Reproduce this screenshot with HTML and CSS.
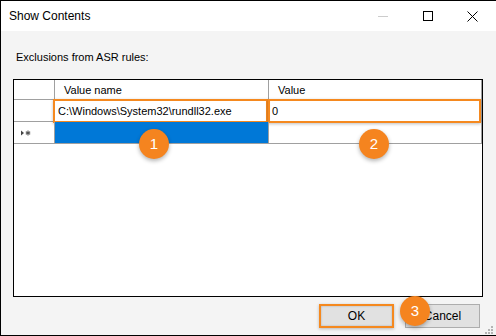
FILE: index.html
```html
<!DOCTYPE html>
<html>
<head>
    <title>Show Contents</title>
    <link rel="stylesheet" href="styles.css">
</head>
<body>
    <div class="window">
        <div class="titlebar">
            <div class="title">Show Contents</div>
            <div class="controls">
                <div class="control">
                    <svg width="10" height="10" viewBox="0 0 10 10"><path d="M0 5.5h10" stroke="#cccccc" stroke-width="1"/></svg>
                </div>
                <div class="control">
                    <svg width="10" height="10" viewBox="0 0 10 10"><rect x="0.5" y="0.5" width="9" height="9" fill="none" stroke="#000" stroke-width="1"/></svg>
                </div>
                <div class="control">
                    <svg width="11" height="11" viewBox="0 0 11 11"><path d="M0.5 0.5l10 10M10.5 0.5l-10 10" stroke="#000" stroke-width="1"/></svg>
                </div>
            </div>
        </div>

        <div class="content">
            <div class="label">Exclusions from ASR rules:</div>

            <div class="grid">
                <div class="cell head corner"></div>
                <div class="cell head">Value name</div>
                <div class="cell head">Value</div>

                <div class="cell rowhead"></div>
                <div class="cell marked name-mark">C:\Windows\System32\rundll32.exe</div>
                <div class="cell marked value-mark">0</div>

                <div class="cell rowhead">
                    <svg width="12" height="8" viewBox="0 0 12 8">
                        <path d="M1 1.5v5l3-2.5z" fill="#444"/>
                        <path d="M8 1.5v5M5.8 2.8l4.4 2.4M5.8 5.2l4.4-2.4" stroke="#555" stroke-width="1.1"/>
                    </svg>
                </div>
                <div class="cell selected"></div>
                <div class="cell"></div>

                <div class="empty"></div>

                <span class="badge badge-one">1</span>
                <span class="badge badge-two">2</span>
            </div>

            <div class="footer">
                <button class="btn btn-ok">OK</button>
                <button class="btn">Cancel</button>
                <span class="badge badge-three">3</span>
                <svg class="grip" width="8" height="8" viewBox="0 0 8 8" fill="#b4b4b4">
                    <rect x="6" y="0" width="2" height="2"/>
                    <rect x="3" y="3" width="2" height="2"/>
                    <rect x="6" y="3" width="2" height="2"/>
                    <rect x="0" y="6" width="2" height="2"/>
                    <rect x="3" y="6" width="2" height="2"/>
                    <rect x="6" y="6" width="2" height="2"/>
                </svg>
            </div>
        </div>
    </div>
</body>
</html>
```

FILE: styles.css
```css
* {
    margin: 0;
    padding: 0;
    box-sizing: border-box;
}

body {
    font-family: 'Liberation Sans', Arial, sans-serif;
    font-size: 11px;
    color: #000;
    background: #fff;
}

.window {
    width: 496px;
    height: 336px;
    border-top: 1px solid #000;
    border-left: 1px solid #000;
    border-bottom: 1px solid #000;
    background: #f4f4f4;
    display: flex;
    flex-direction: column;
}

.titlebar {
    height: 30px;
    background: #fff;
    display: flex;
    align-items: center;
    justify-content: space-between;
}

.title {
    padding-left: 8px;
    padding-bottom: 1px;
    font-size: 12px;
}

.controls {
    display: flex;
    height: 100%;
    padding-right: 1px;
}

.control {
    width: 45px;
    display: flex;
    align-items: center;
    justify-content: center;
}

.content {
    flex: 1;
    padding: 18px 13px 0 12px;
    display: flex;
    flex-direction: column;
}

.label {
    height: 16px;
    line-height: 16px;
    padding-left: 3px;
    margin-bottom: 14px;
}

.grid {
    position: relative;
    width: 470px;
    height: 218px;
    border: 1px solid #000;
    background: #fff;
    display: grid;
    grid-template-columns: 41px 214px 213px;
    grid-template-rows: 20px 22px 22px 1fr;
}

.cell {
    border-right: 1px solid #a0a0a0;
    border-bottom: 1px solid #a0a0a0;
    padding-left: 3px;
    display: flex;
    align-items: center;
    white-space: nowrap;
    position: relative;
}

.head {
    padding-left: 9px;
}

.rowhead {
    padding-left: 6px;
}

.selected {
    background: #0078d7;
}

.empty {
    grid-column: 1 / -1;
}

.marked::after {
    content: "";
    position: absolute;
    border: 2px solid #f5891f;
    box-shadow: 0 1px 3px rgba(0, 0, 0, 0.25);
}

.name-mark::after {
    left: -2px;
    right: 0;
    top: -1px;
    bottom: -2px;
}

.value-mark::after {
    left: -1px;
    right: 0;
    top: -1px;
    bottom: -2px;
}

.badge {
    position: absolute;
    width: 30px;
    height: 30px;
    border-radius: 50%;
    background: #f5841f;
    color: #fff;
    font-size: 15px;
    line-height: 30px;
    text-align: center;
    box-shadow: 0 2px 4px rgba(0, 0, 0, 0.3);
    z-index: 2;
}

.badge-one {
    left: 125px;
    top: 49px;
}

.badge-two {
    left: 345px;
    top: 49px;
}

.footer {
    position: relative;
    margin-top: 7px;
    height: 24px;
    display: flex;
    justify-content: flex-end;
    gap: 11px;
    padding-right: 3px;
}

.btn {
    width: 75px;
    height: 24px;
    background: #e1e1e1;
    border: 1px solid #adadad;
    font-family: 'Liberation Sans', Arial, sans-serif;
    font-size: 12px;
    color: #000;
}

.btn-ok {
    border: 2px solid #f5891f;
    box-shadow: inset 0 0 2px rgba(0, 0, 0, 0.25), 0 1px 3px rgba(0, 0, 0, 0.25);
}

.badge-three {
    left: 387px;
    top: -8px;
}

.grip {
    position: absolute;
    right: -10px;
    bottom: -6px;
}
```
